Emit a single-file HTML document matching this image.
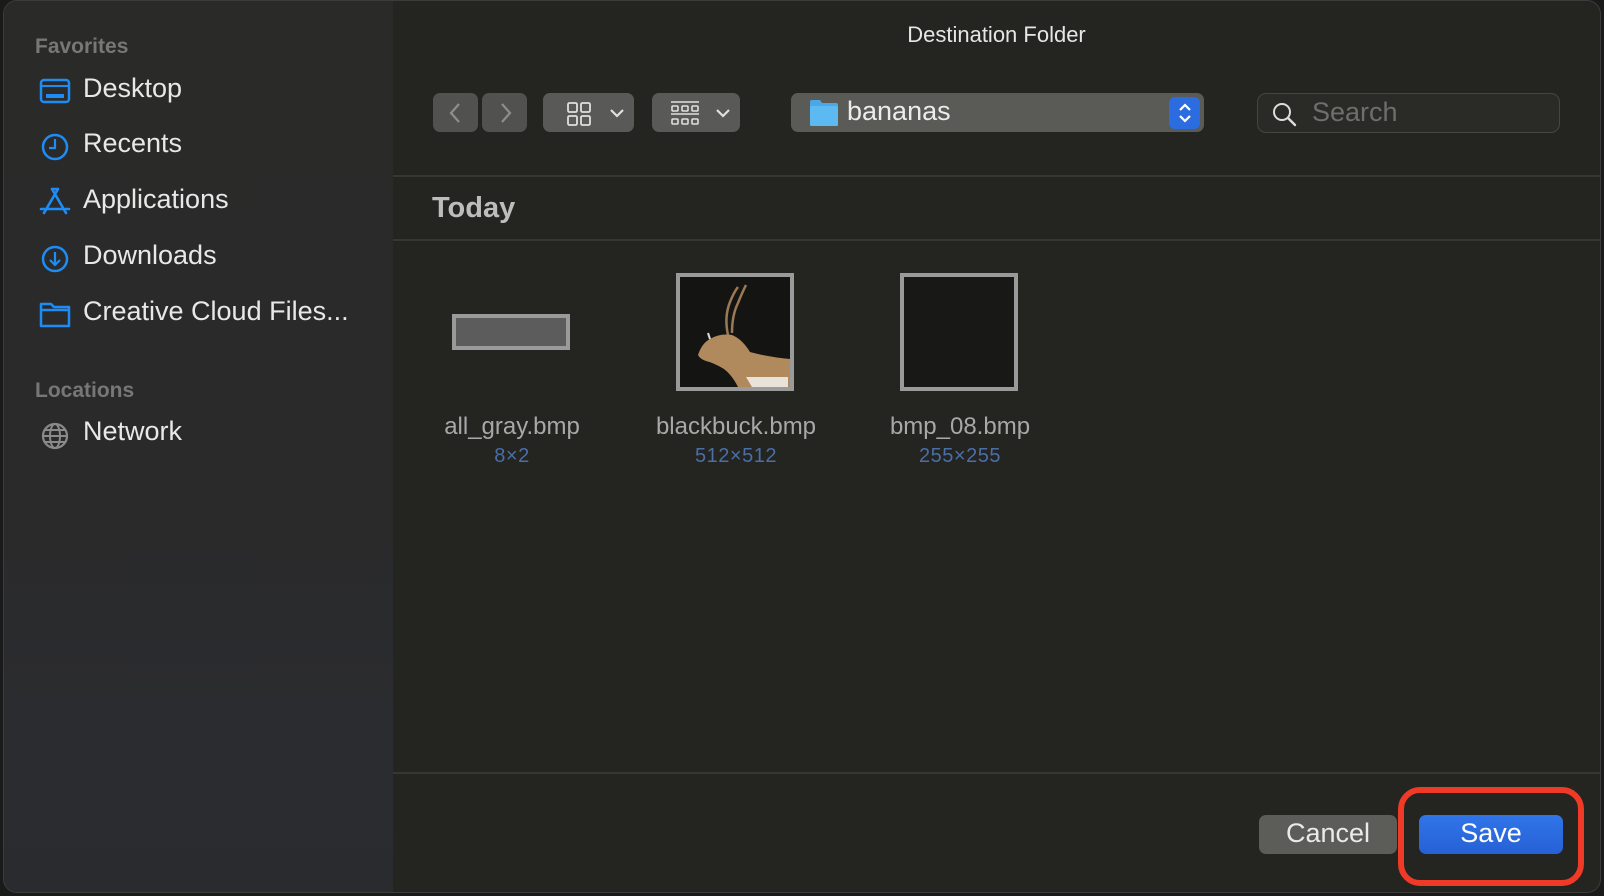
<!DOCTYPE html>
<html><head><meta charset="utf-8"><style>
*{margin:0;padding:0;box-sizing:border-box}
body{width:1604px;height:896px;background:#1a1a1a;font-family:"Liberation Sans",sans-serif;overflow:hidden;position:relative}
.win{position:absolute;left:3px;top:0;width:1598px;height:893px;border-radius:14px;background:#242421;overflow:hidden;border:1px solid #3c3c3a}
.side{position:absolute;left:0;top:0;width:389px;height:100%;background:linear-gradient(180deg,#2a2a29 0%,#2a2a2a 55%,#2b2c30 85%,#2a2b2f 100%)}
.a{position:absolute;white-space:nowrap}
.hdr{color:#777;font-size:21px;font-weight:bold;left:31px}
.it{color:#e8e8e8;font-size:27px;left:79px}
.ic{position:absolute;left:35px}
.btn{position:absolute;background:#595957;border-radius:7px}
.ln{position:absolute;left:389px;right:0;height:2px;background:#363634}
.nm{color:#a8a8a8;font-size:24px;text-align:center;width:220px}
.dm{color:#4a6ea8;font-size:20px;text-align:center;width:220px;letter-spacing:.5px}
</style></head><body>
<div class="win">
<div class="side">
<div class="a hdr" style="top:34px">Favorites</div>
<svg class="ic" style="top:77px" width="32" height="26" viewBox="0 0 32 26"><rect x="2" y="2" width="28" height="22" rx="3" fill="none" stroke="#1e8cf5" stroke-width="2.5"/><line x1="2" y1="8" x2="30" y2="8" stroke="#1e8cf5" stroke-width="2"/><rect x="7" y="16" width="18" height="4" fill="#1e8cf5"/></svg>
<div class="a it" style="top:72px">Desktop</div>
<svg class="ic" style="top:131px" width="32" height="30" viewBox="0 0 32 30"><circle cx="16" cy="15" r="12" fill="none" stroke="#1e8cf5" stroke-width="2.5"/><path d="M16 7V16H10" fill="none" stroke="#1e8cf5" stroke-width="2.2"/></svg>
<div class="a it" style="top:127px">Recents</div>
<svg class="ic" style="top:186px" width="32" height="30" viewBox="0 0 32 30"><path d="M13 2L27 26M19 2L5 26M2 22H30M13 2H19" fill="none" stroke="#1e8cf5" stroke-width="2.6" stroke-linecap="round"/></svg>
<div class="a it" style="top:183px">Applications</div>
<svg class="ic" style="top:243px" width="32" height="30" viewBox="0 0 32 30"><circle cx="16" cy="15" r="12" fill="none" stroke="#1e8cf5" stroke-width="2.5"/><path d="M16 8V21M11 16L16 21L21 16" fill="none" stroke="#1e8cf5" stroke-width="2.2"/></svg>
<div class="a it" style="top:239px">Downloads</div>
<svg class="ic" style="top:299px" width="32" height="28" viewBox="0 0 32 28"><path d="M2 4H12L15 7H30V26H2Z M2 10H30" fill="none" stroke="#1e8cf5" stroke-width="2.5" stroke-linejoin="round"/></svg>
<div class="a it" style="top:295px">Creative Cloud Files...</div>
<div class="a hdr" style="top:378px">Locations</div>
<svg class="ic" style="top:420px" width="32" height="30" viewBox="0 0 32 30"><circle cx="16" cy="15" r="12" fill="none" stroke="#8a8a8a" stroke-width="2.2"/><ellipse cx="16" cy="15" rx="5" ry="12" fill="none" stroke="#8a8a8a" stroke-width="2"/><path d="M4 15H28M6 9H26M6 21H26" stroke="#8a8a8a" stroke-width="2"/></svg>
<div class="a it" style="top:415px">Network</div>
</div>

<div class="a" style="left:389px;right:0;top:21px;text-align:center;color:#e6e6e6;font-size:22px">Destination Folder</div>

<div class="btn" style="left:429px;top:92px;width:45px;height:39px;opacity:.85"></div>
<svg class="a" style="left:442px;top:100px" width="20" height="24"><path d="M13 3L5 12L13 21" fill="none" stroke="#8e8e8c" stroke-width="2.2"/></svg>
<div class="btn" style="left:478px;top:92px;width:45px;height:39px;opacity:.85"></div>
<svg class="a" style="left:492px;top:100px" width="20" height="24"><path d="M6 3L14 12L6 21" fill="none" stroke="#8e8e8c" stroke-width="2.2"/></svg>

<div class="btn" style="left:539px;top:92px;width:91px;height:39px"></div>
<svg class="a" style="left:562px;top:100px" width="26" height="26" viewBox="0 0 26 26" fill="none" stroke="#e0e0e0" stroke-width="1.8"><rect x="2" y="2" width="9" height="9" rx="1.5"/><rect x="15" y="2" width="9" height="9" rx="1.5"/><rect x="2" y="15" width="9" height="9" rx="1.5"/><rect x="15" y="15" width="9" height="9" rx="1.5"/></svg>
<svg class="a" style="left:605px;top:106px" width="16" height="12"><path d="M2 3L8 9L14 3" fill="none" stroke="#e0e0e0" stroke-width="2.2"/></svg>

<div class="btn" style="left:648px;top:92px;width:88px;height:39px"></div>
<svg class="a" style="left:666px;top:99px" width="30" height="28" viewBox="0 0 30 28" fill="none" stroke="#e0e0e0" stroke-width="1.6"><path d="M1 2H29M1 14H29"/><rect x="2" y="6" width="6" height="5" rx="1"/><rect x="12" y="6" width="6" height="5" rx="1"/><rect x="22" y="6" width="6" height="5" rx="1"/><rect x="2" y="19" width="6" height="5" rx="1"/><rect x="12" y="19" width="6" height="5" rx="1"/><rect x="22" y="19" width="6" height="5" rx="1"/></svg>
<svg class="a" style="left:711px;top:106px" width="16" height="12"><path d="M2 3L8 9L14 3" fill="none" stroke="#e0e0e0" stroke-width="2.2"/></svg>

<div class="btn" style="left:787px;top:92px;width:413px;height:39px;background:#5a5a57"></div>
<svg class="a" style="left:805px;top:98px" width="30" height="28" viewBox="0 0 30 28"><path d="M1 3Q1 1 3 1H11L13 4H27Q29 4 29 6V26Q29 27 27 27H3Q1 27 1 25Z" fill="#4aa8e8"/><rect x="1" y="7" width="28" height="20" rx="1.5" fill="#5cb9f2"/></svg>
<div class="a" style="left:843px;top:95px;color:#ececec;font-size:27px">bananas</div>
<div class="a" style="left:1165px;top:96px;width:31px;height:32px;background:#2b6de0;border-radius:6px"></div>
<svg class="a" style="left:1171px;top:99px" width="20" height="26"><path d="M5 10L10 5L15 10M5 16L10 21L15 16" fill="none" stroke="#fff" stroke-width="2.2"/></svg>

<div class="a" style="left:1253px;top:92px;width:303px;height:40px;border:1px solid #454542;border-radius:9px;background:#2a2a27"></div>
<svg class="a" style="left:1266px;top:100px" width="28" height="28"><circle cx="12" cy="11" r="8" fill="none" stroke="#ddd" stroke-width="2"/><path d="M18 17L25 24" stroke="#ddd" stroke-width="2.4" stroke-linecap="round"/></svg>
<div class="a" style="left:1308px;top:96px;color:#6e6e6c;font-size:27px">Search</div>

<div class="ln" style="top:174px"></div>
<div class="a" style="left:428px;top:191px;color:#bdbdbb;font-size:29px;font-weight:bold">Today</div>
<div class="ln" style="top:238px"></div>

<div class="a" style="left:448px;top:313px;width:118px;height:36px;border:4px solid #9a9a9a;background:#5c5c5c"></div>
<div class="a" style="left:672px;top:272px;width:118px;height:118px;border:4px solid #9a9a9a;background:#141412">
<svg width="110" height="110" viewBox="0 0 110 110"><path d="M48 58Q44 40 50 25Q54 15 58 10M52 56Q52 38 58 26Q62 16 66 8" stroke="#9a7a55" stroke-width="2.5" fill="none"/><path d="M18 78Q22 66 30 62Q40 56 52 58Q62 62 70 75Q88 80 110 82V110H58Q52 98 44 92Q34 86 26 84Q20 82 18 78Z" fill="#b08a5c"/><path d="M66 100L72 110H108V100Z" fill="#e8e2d8"/><path d="M30 62L28 56" stroke="#ddd" stroke-width="2"/></svg>
</div>
<div class="a" style="left:896px;top:272px;width:118px;height:118px;border:4px solid #9a9a9a;background:#181816"></div>

<div class="a nm" style="left:398px;top:412px">all_gray.bmp</div>
<div class="a dm" style="left:398px;top:444px">8×2</div>
<div class="a nm" style="left:622px;top:412px">blackbuck.bmp</div>
<div class="a dm" style="left:622px;top:444px">512×512</div>
<div class="a nm" style="left:846px;top:412px">bmp_08.bmp</div>
<div class="a dm" style="left:846px;top:444px">255×255</div>

<div class="ln" style="top:771px"></div>
<div class="btn" style="left:1255px;top:814px;width:138px;height:39px;background:#5c5c59"></div>
<div class="a" style="left:1255px;top:817px;width:138px;text-align:center;color:#eaeaea;font-size:27px">Cancel</div>
<div class="a" style="left:1415px;top:814px;width:144px;height:39px;border-radius:7px;background:linear-gradient(#3075e8,#2661d6)"></div>
<div class="a" style="left:1415px;top:817px;width:144px;text-align:center;color:#fff;font-size:27px">Save</div>
<div class="a" style="left:1394px;top:786px;width:186px;height:99px;border:6px solid #ee3a26;border-radius:22px"></div>
</div>
</body></html>
